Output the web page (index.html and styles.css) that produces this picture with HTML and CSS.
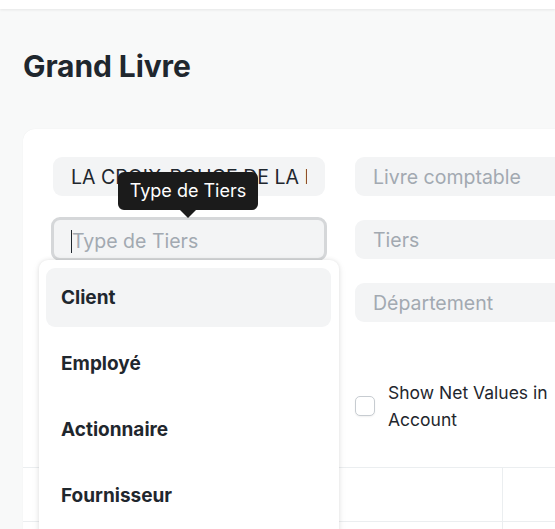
FILE: index.html
```html
<!DOCTYPE html>
<html lang="fr">
<head>
<meta charset="utf-8">
<title>Grand Livre</title>
<link rel="stylesheet" href="styles.css">
</head>
<body>
<div class="navbar"></div>
<div class="page-head">
  <h1 class="page-title">Grand Livre</h1>
</div>
<div class="card">
  <div class="filters">
    <div class="field"><span class="value">LA CROIX-ROUGE DE LA RDC</span></div>
    <div class="field"><span class="placeholder">Livre comptable</span></div>
    <div class="field focused"><span class="caret"></span><span class="placeholder">Type de Tiers</span></div>
    <div class="field"><span class="placeholder">Tiers</span></div>
    <div class="field hidden-field"></div>
    <div class="field"><span class="placeholder">Département</span></div>
    <div class="cell-empty"></div>
    <div class="check-field">
      <span class="checkbox"></span>
      <span class="check-label">Show Net Values in Account</span>
    </div>
  </div>
  <div class="report-table">
    <div class="row"><div class="col"></div><div class="col"></div></div>
    <div class="row"><div class="col"></div><div class="col"></div></div>
  </div>
</div>

<div class="tooltip">Type de Tiers</div>

<div class="dropdown">
  <div class="item active">Client</div>
  <div class="item">Employé</div>
  <div class="item">Actionnaire</div>
  <div class="item">Fournisseur</div>
</div>
</body>
</html>
```

FILE: styles.css
```css
html, body {
  margin: 0;
  padding: 0;
}
body {
  width: 555px;
  height: 529px;
  overflow: hidden;
  background: #f8f9f9;
  font-family: Inter, "Noto Sans", sans-serif;
  color: #1f272e;
  position: relative;
}
.navbar {
  height: 9px;
  background: #ffffff;
  box-shadow: 0 1px 3px rgba(0, 0, 0, 0.08);
}
.page-head {
  padding: 40px 0 0 23px;
}
.page-title {
  margin: 0;
  font-size: 30px;
  line-height: 34px;
  font-weight: 700;
  color: #1f272e;
  letter-spacing: -0.1px;
}
.card {
  margin: 46px 0 0 23px;
  width: 700px;
  background: #ffffff;
  border-radius: 12px;
  box-shadow: 0 0 1px rgba(0, 0, 0, 0.08);
  padding-top: 28px;
}
.filters {
  display: grid;
  grid-template-columns: 272px 272px;
  column-gap: 30px;
  row-gap: 24px;
  padding: 0 30px;
}
.field {
  height: 39px;
  box-sizing: border-box;
  background: #f3f4f5;
  border-radius: 9px;
  padding: 0 18px;
  display: flex;
  align-items: center;
  overflow: hidden;
  white-space: nowrap;
  font-size: 19.5px;
  position: relative;
}
.value {
  color: #1f272e;
  overflow: hidden;
  text-overflow: clip;
}
.placeholder {
  color: #a2a9b1;
}
.field.focused {
  margin: -3px -2px -2px -2px;
  height: 44px;
  border: 3px solid #d5d7d9;
  padding: 3px 0 0 18px;
}
.caret {
  display: block;
  position: absolute;
  left: 17px;
  top: 10px;
  width: 1px;
  height: 23px;
  background: #1f272e;
}
.cell-empty {
  height: 1px;
}
.check-field {
  display: flex;
  align-items: center;
  gap: 13px;
  margin-top: 33px;
}
.checkbox {
  flex: none;
  width: 20px;
  height: 20px;
  box-sizing: border-box;
  border: 1px solid #c7ccd1;
  border-radius: 5px;
  background: #ffffff;
  box-shadow: 0 1px 2px rgba(0, 0, 0, 0.06);
}
.check-label {
  font-size: 17.5px;
  line-height: 27px;
  color: #1f272e;
  width: 170px;
}
.report-table {
  margin-top: 34px;
}
.row {
  display: grid;
  grid-template-columns: 480px 1fr;
  height: 53px;
  border-top: 1px solid #ebeef0;
}
.row .col:first-child {
  border-right: 1px solid #ebeef0;
}
.tooltip {
  position: absolute;
  left: 118px;
  top: 172px;
  width: 140px;
  height: 38px;
  box-sizing: border-box;
  background: #1b1b1b;
  color: #ffffff;
  border-radius: 6px;
  font-size: 18px;
  line-height: 38px;
  text-align: center;
}
.tooltip::after {
  content: "";
  position: absolute;
  left: 62px;
  bottom: -8px;
  border-left: 8px solid transparent;
  border-right: 8px solid transparent;
  border-top: 8px solid #1b1b1b;
}
.dropdown {
  position: absolute;
  left: 39px;
  top: 260px;
  width: 300px;
  height: 300px;
  box-sizing: border-box;
  background: #ffffff;
  border-radius: 9px;
  box-shadow: 0 0 4px rgba(0, 0, 0, 0.1), 0 2px 10px rgba(0, 0, 0, 0.06);
  padding: 8px 8px 0 7px;
  display: flex;
  flex-direction: column;
  gap: 7px;
}
.item {
  height: 59px;
  border-radius: 9px;
  padding-left: 15px;
  display: flex;
  align-items: center;
  font-size: 19px;
  font-weight: 700;
  color: #1f272e;
}
.item.active {
  background: #f3f4f5;
}
```
